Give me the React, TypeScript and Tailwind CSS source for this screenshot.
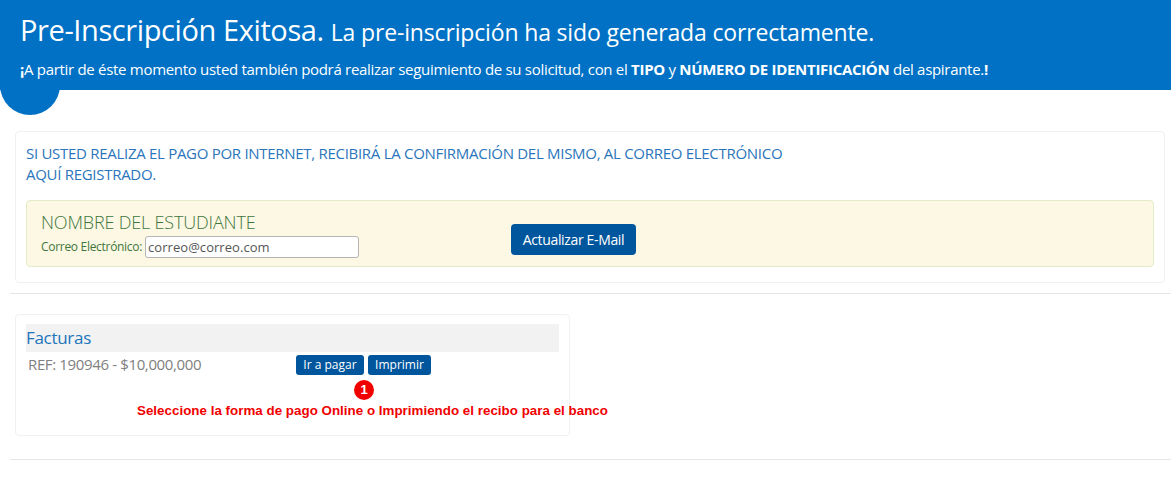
import React from 'react';

const font = "font-['Open_Sans','Noto_Sans',sans-serif]";

const App: React.FC = () => {
  return (
    <div className={`w-[1171px] h-[485px] overflow-hidden bg-white ${font}`}>
      {/* Header */}
      <div className="relative h-[90px] bg-[#0071c5] text-white pl-[20px] pt-[10px]">
        <div className="absolute left-0 top-[55px] w-[60px] h-[60px] rounded-full bg-[#0071c5]" />
        <div className="relative flex items-baseline h-[40px]">
          <span className="text-[29px] leading-[40px] tracking-[-0.4px]">Pre-Inscripción Exitosa.</span>
          <span className="text-[23px] leading-[40px] ml-[7px] tracking-[-0.16px]">La pre-inscripción ha sido generada correctamente.</span>
        </div>
        <p className="relative text-[15px] leading-[20px] mt-[9px] tracking-[-0.3px]">
          <b>¡</b>A partir de éste momento usted también podrá realizar seguimiento de su solicitud, con el <b>TIPO</b> y <b>NÚMERO DE IDENTIFICACIÓN</b> del aspirante.<b>!</b>
        </p>
      </div>

      {/* Card principal */}
      <div className="ml-[15px] w-[1150px] mt-[41px] h-[152px] border border-[#f0f0f0] rounded-[4px] px-[10px] pt-[11px]">
        <p className="w-[770px] text-[15px] leading-[21px] text-[#2a75bb] tracking-[-0.29px]">
          SI USTED REALIZA EL PAGO POR INTERNET, RECIBIRÁ LA CONFIRMACIÓN DEL MISMO, AL CORREO ELECTRÓNICO AQUÍ REGISTRADO.
        </p>
        <div className="mt-[15px] h-[67px] bg-[#fcf8e3] border border-[#e3ecc8] rounded-[4px] pl-[14px] flex items-start text-[#3c763d]">
          <div className="w-[470px] pt-[9px]">
            <h2 className="text-[18px] leading-[24px] font-light tracking-[-0.17px]">NOMBRE DEL ESTUDIANTE</h2>
            <div className="flex items-center mt-[2px]">
              <label className="text-[12px] tracking-[-0.3px] mr-[3px]">Correo Electrónico:</label>
              <input
                readOnly
                value="correo@correo.com"
                className="w-[214px] h-[22px] bg-white border border-[#b4b4b4] rounded-[3px] px-[2px] text-[13px] tracking-[0.05px] text-[#555] outline-none"
              />
            </div>
          </div>
          <button className="mt-[23px] w-[125px] h-[31px] bg-[#00569d] text-white text-[14px] rounded-[4px] tracking-[-0.35px]">
            Actualizar E-Mail
          </button>
        </div>
      </div>

      <hr className="ml-[10px] mt-[10px] border-t border-[#e6e6e6]" />

      {/* Facturas */}
      <div className="ml-[15px] mt-[20px] w-[555px] h-[122px] border border-[#f0f0f0] rounded-[4px] pl-[10px] pt-[9px]">
        <div className="w-[533px] h-[28px] bg-[#f2f2f2] text-[#1c75bc] text-[17px] leading-[28px] tracking-[-0.3px]">Facturas</div>
        <div className="flex items-center h-[24px] mt-[1px]">
          <span className="w-[270px] pl-[2px] pb-[2px] text-[15px] leading-[22px] text-[#808080] tracking-[-0.36px]">REF: 190946 - $10,000,000</span>
          <div className="flex gap-[4px]">
            <button className="w-[68px] h-[20px] bg-[#00569d] text-white text-[12px] leading-[20px] rounded-[3px]">Ir a pagar</button>
            <button className="w-[63px] h-[20px] bg-[#00569d] text-white text-[12px] leading-[20px] rounded-[3px]">Imprimir</button>
          </div>
        </div>
        <div className="flex justify-center ml-[113px] w-[450px] mt-[3px]">
          <span className="w-[20px] h-[20px] rounded-full bg-[#f00000] text-white text-[13px] font-bold leading-[20px] text-center font-['Liberation_Sans',sans-serif]">1</span>
        </div>
        <p className="ml-[111px] whitespace-nowrap text-[13.33px] leading-[16px] mt-[3px] font-bold text-[#f00000] font-['Liberation_Sans',sans-serif] tracking-[0.03px]">
          Seleccione la forma de pago Online o Imprimiendo el recibo para el banco
        </p>
      </div>

      <hr className="ml-[10px] mt-[23px] border-t border-[#e6e6e6]" />
    </div>
  );
};

export default App;
